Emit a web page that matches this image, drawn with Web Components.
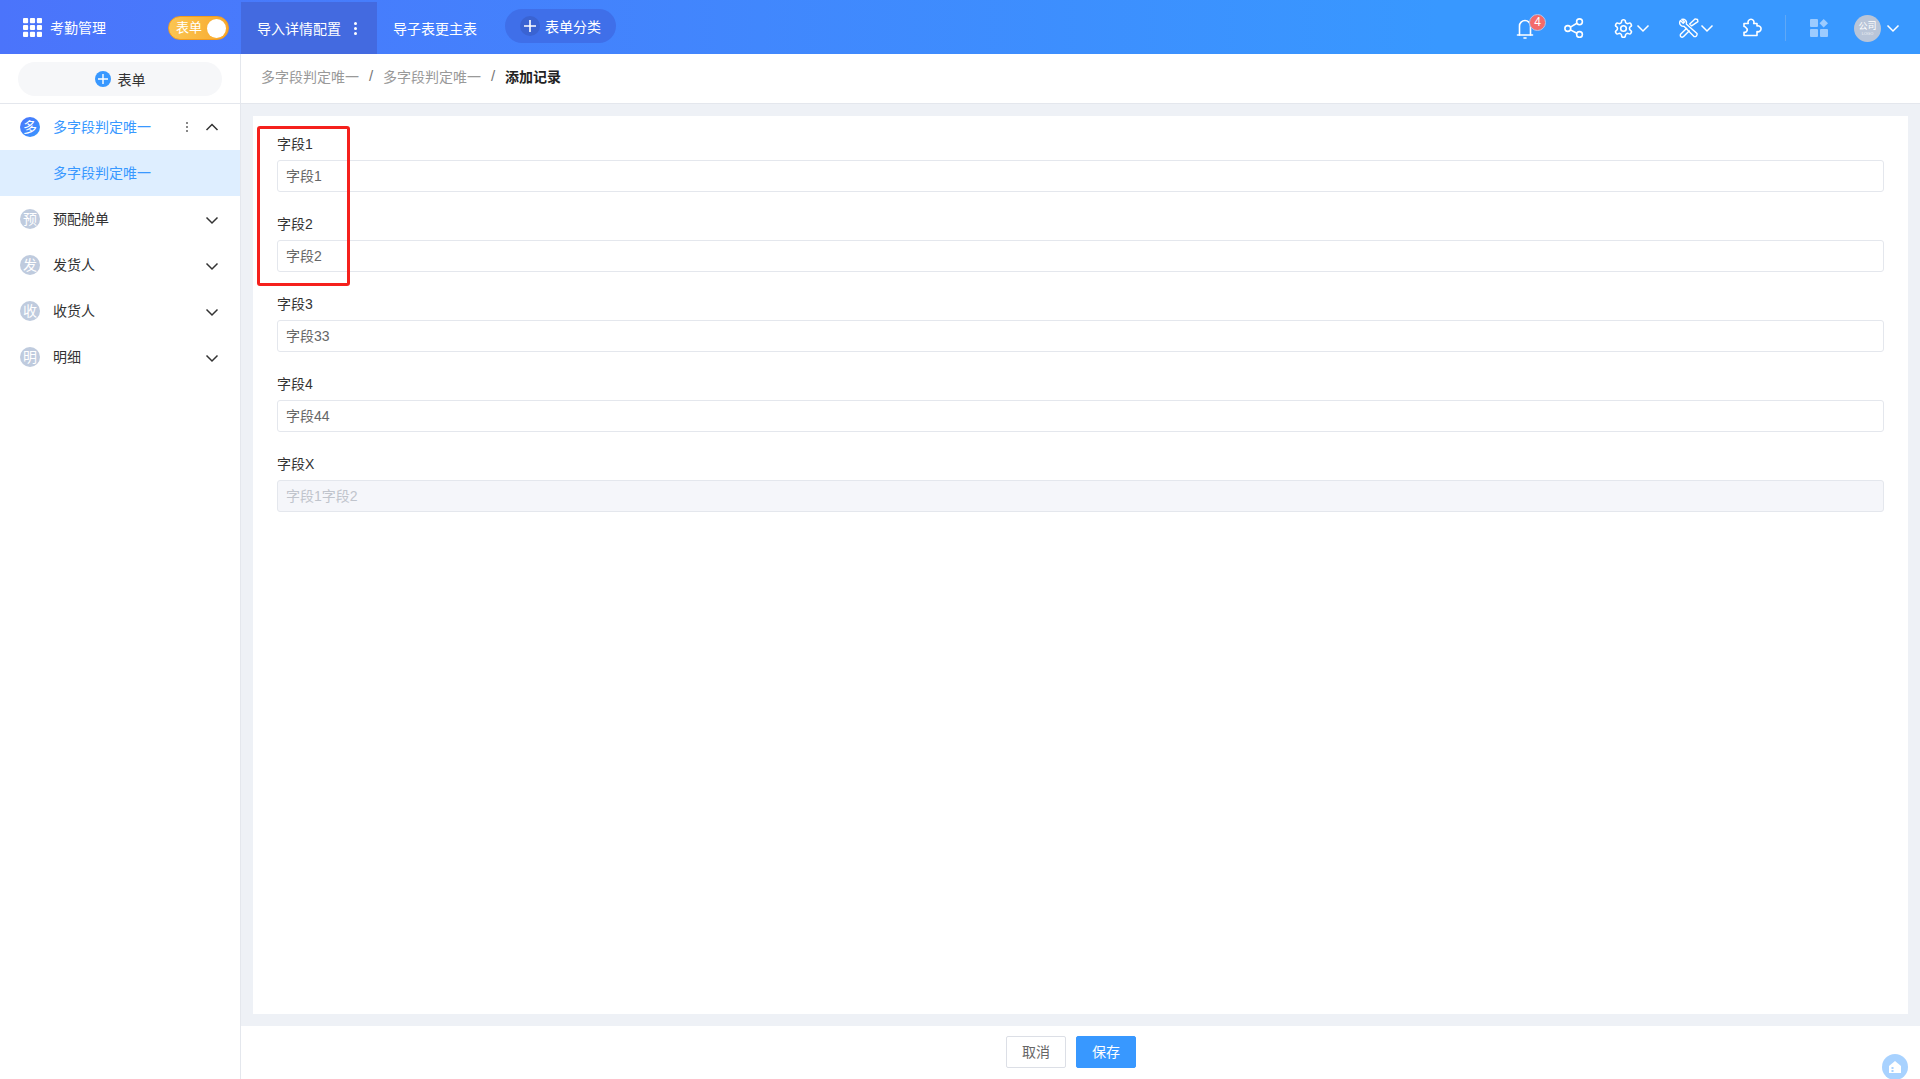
<!DOCTYPE html>
<html lang="zh">
<head>
<meta charset="utf-8">
<title>添加记录</title>
<style>
  html, body { margin: 0; height: 100%; }
  body {
    font: 14px "Liberation Sans", "Noto Sans CJK SC", sans-serif;
    color: #333;
    overflow: hidden;
  }
</style>
</head>
<body>
<app-shell>
  <top-bar slot="top"></top-bar>
  <side-nav slot="side">
    <nav-group mark="多" label="多字段判定唯一" open>
      <nav-sub>多字段判定唯一</nav-sub>
    </nav-group>
    <nav-group mark="预" label="预配舱单"></nav-group>
    <nav-group mark="发" label="发货人"></nav-group>
    <nav-group mark="收" label="收货人"></nav-group>
    <nav-group mark="明" label="明细"></nav-group>
  </side-nav>
  <bread-crumb slot="crumb"></bread-crumb>
  <form-card slot="main">
    <form-field label="字段1">字段1</form-field>
    <form-field label="字段2">字段2</form-field>
    <form-field label="字段3">字段33</form-field>
    <form-field label="字段4">字段44</form-field>
    <form-field label="字段X" disabled>字段1字段2</form-field>
  </form-card>
  <form-footer slot="foot"></form-footer>
</app-shell>
<help-bubble></help-bubble>

<script>
const chevron = (color, up) => `
  <svg width="14" height="14" viewBox="0 0 14 14" fill="none" stroke="${color}" stroke-width="1.5">
    <path d="${up ? 'M1.5 10 7 4.5 12.5 10' : 'M1.5 4.5 7 10 12.5 4.5'}"/>
  </svg>`;

class AppShell extends HTMLElement {
  constructor() {
    super();
    this.attachShadow({ mode: 'open' }).innerHTML = `
      <style>
        :host {
          display: grid;
          grid-template-columns: 241px 1fr;
          grid-template-rows: 54px 50px 1fr 53px;
          height: 1079px;
          background: #eef1f6;
        }
        .top { grid-column: 1 / 3; }
        .side { grid-row: 2 / 5; }
        .main { padding: 12px 12px 12px 12px; display: flex; min-height: 0; }
        .main ::slotted(*) { flex: 1; }
      </style>
      <div class="top"><slot name="top"></slot></div>
      <div class="side"><slot name="side"></slot></div>
      <slot name="crumb"></slot>
      <div class="main"><slot name="main"></slot></div>
      <slot name="foot"></slot>
    `;
  }
}

class TopBar extends HTMLElement {
  constructor() {
    super();
    this.attachShadow({ mode: 'open' }).innerHTML = `
      <style>
        :host {
          display: flex;
          align-items: center;
          height: 54px;
          color: #fff;
          background: linear-gradient(90deg, #4b74fb 0%, #3898ff 75%);
        }
        svg { display: block; flex: none; }
        .brand { width: 168px; display: flex; align-items: center; padding-left: 23px; box-sizing: border-box; gap: 8px; }
        .toggle {
          width: 61px; height: 24px; border-radius: 12px; box-sizing: border-box; flex: none;
          background: linear-gradient(90deg, #fbc552, #f8a92c);
          border: 1px solid #f39c1f;
          display: flex; align-items: center; justify-content: space-between;
          padding: 0 2px 0 7px; margin-top: 2px; font-size: 13px;
        }
        .toggle span:first-child { padding-bottom: 3px; }
        .knob { width: 19px; height: 19px; border-radius: 50%; background: #fff; }
        .tab {
          display: flex; align-items: center; height: 52px; margin-top: 2px; box-sizing: border-box;
        }
        .tab.on { width: 136px; margin-left: 12px; padding-left: 16px; background: #436ae0; gap: 13px; }
        .tab.next { width: 128px; padding-left: 16px; }
        .dots { display: flex; flex-direction: column; gap: 2px; }
        .dots i { width: 3px; height: 3px; background: #fff; border-radius: 50%; }
        .pill {
          width: 111px; height: 34px; margin-top: -2px; border-radius: 17px; background: #3f6fe9;
          display: flex; align-items: center; padding-left: 15px; box-sizing: border-box; gap: 5px; font-size: 14px;
        }
        .plus { width: 20px; height: 20px; border-radius: 50%; background: #3a63d2; display: grid; place-items: center; flex: none; }
        .tools { margin-left: auto; display: flex; align-items: center; height: 100%; box-sizing: border-box; padding-top: 2px; }
        .bell { position: relative; width: 24px; }
        .badge {
          position: absolute; left: 16px; top: -2px; width: 17px; height: 17px; border-radius: 50%;
          background: #f46a6a; border: 1px solid #a9c6f2; box-sizing: border-box;
          font: 12px/15px "Liberation Sans", sans-serif; text-align: center; color: #fff;
        }
        .combo { display: flex; align-items: center; }
        .rule { width: 1px; height: 26px; background: #5fa8f7; }
        .avatar {
          width: 27px; height: 27px; border-radius: 50%; background: #b9c5d8; color: #fff;
          display: flex; flex-direction: column; align-items: center; justify-content: center;
          font-size: 9px; line-height: 10px; flex: none;
        }
        .avatar small { font-size: 4px; line-height: 5px; opacity: .8; }
      </style>
      <div class="brand">
        <svg width="19" height="19" viewBox="0 0 20 20" fill="#fff">
          <rect x="0" y="0" width="5.4" height="5.4" rx="1"/><rect x="7.3" y="0" width="5.4" height="5.4" rx="1"/><rect x="14.6" y="0" width="5.4" height="5.4" rx="1"/>
          <rect x="0" y="7.3" width="5.4" height="5.4" rx="1"/><rect x="7.3" y="7.3" width="5.4" height="5.4" rx="1"/><rect x="14.6" y="7.3" width="5.4" height="5.4" rx="1"/>
          <rect x="0" y="14.6" width="5.4" height="5.4" rx="1"/><rect x="7.3" y="14.6" width="5.4" height="5.4" rx="1"/><rect x="14.6" y="14.6" width="5.4" height="5.4" rx="1"/>
        </svg>
        <span>考勤管理</span>
      </div>
      <div class="toggle"><span>表单</span><span class="knob"></span></div>
      <div class="tab on"><span>导入详情配置</span><span class="dots"><i></i><i></i><i></i></span></div>
      <div class="tab next">导子表更主表</div>
      <div class="pill">
        <span class="plus"><svg width="12" height="12" viewBox="0 0 12 12" stroke="#fff" stroke-width="1.6"><path d="M6 0v12M0 6h12"/></svg></span>
        <span>表单分类</span>
      </div>
      <div class="tools">
        <div class="bell">
          <svg width="24" height="24" viewBox="0 0 24 24" fill="none" stroke="#fff" stroke-width="1.6" stroke-linecap="round">
            <path d="M6.5 19V10a5.5 5.5 0 0 1 11 0v9"/><path d="M4.5 19h15"/><path d="M11 22h2"/>
          </svg>
          <span class="badge">4</span>
        </div>
        <svg style="margin-left:27px" width="20" height="20" viewBox="0 0 20 20" fill="none" stroke="#fff" stroke-width="1.6">
          <circle cx="15.5" cy="3.8" r="2.9"/><circle cx="3.8" cy="10.5" r="2.9"/><circle cx="15.5" cy="16.5" r="2.9"/>
          <path d="M6.4 9.1l6.5-3.9M6.4 11.9l6.6 3.3"/>
        </svg>
        <div class="combo" style="margin-left:29px">
          <svg width="21" height="21" viewBox="0 0 24 24" fill="none" stroke="#fff" stroke-width="1.8" stroke-linejoin="round">
            <path d="M12.22 2h-.44a2 2 0 0 0-2 2v.18a2 2 0 0 1-1 1.73l-.43.25a2 2 0 0 1-2 0l-.15-.08a2 2 0 0 0-2.73.73l-.22.38a2 2 0 0 0 .73 2.73l.15.1a2 2 0 0 1 1 1.72v.51a2 2 0 0 1-1 1.74l-.15.09a2 2 0 0 0-.73 2.73l.22.38a2 2 0 0 0 2.73.73l.15-.08a2 2 0 0 1 2 0l.43.25a2 2 0 0 1 1 1.73V20a2 2 0 0 0 2 2h.44a2 2 0 0 0 2-2v-.18a2 2 0 0 1 1-1.73l.43-.25a2 2 0 0 1 2 0l.15.08a2 2 0 0 0 2.73-.73l.22-.39a2 2 0 0 0-.73-2.73l-.15-.08a2 2 0 0 1-1-1.74v-.5a2 2 0 0 1 1-1.74l.15-.09a2 2 0 0 0 .73-2.73l-.22-.38a2 2 0 0 0-2.73-.73l-.15.08a2 2 0 0 1-2 0l-.43-.25a2 2 0 0 1-1-1.73V4a2 2 0 0 0-2-2z"/>
            <circle cx="12" cy="12" r="3.2"/>
          </svg>
          <span style="margin-left:2px">${chevron('#fff', false)}</span>
        </div>
        <div class="combo" style="margin-left:29px">
          <svg width="20" height="20" viewBox="0 0 20 20" fill="none" stroke="#fff" stroke-width="1.4" stroke-linejoin="round">
            <path d="M1.5 2.5 4.2 5.2 5.5 4 2.8 1.3A3.6 3.6 0 0 1 7.3 5.9L18 15.5A2.4 2.4 0 0 1 15 18.5L5 8.3A3.6 3.6 0 0 1 1.5 2.5Z"/>
            <path d="M18.5 1.5 16 .9 10.7 6l1.9 1.9 6.3-4.3ZM8 10 1.8 16A1.9 1.9 0 0 0 4.6 18.6L10.6 12.4"/>
          </svg>
          <span style="margin-left:1px">${chevron('#fff', false)}</span>
        </div>
        <svg style="margin-left:28px" width="20" height="20" viewBox="0 0 20 20" fill="none" stroke="#fff" stroke-width="1.6" stroke-linejoin="round">
          <path d="M2 5.5h4.3a3 3 0 1 1 5.4 0H15V8a3 3 0 1 1 0 5.6V17.5H2v-3.3a2.5 2.5 0 0 0 2.2-4.4A2.5 2.5 0 0 0 2 8.5Z"/>
        </svg>
        <span class="rule" style="margin-left:23px"></span>
        <svg style="margin-left:24px" width="18" height="18" viewBox="0 0 18 18" fill="#9ccbff">
          <rect x="0" y="0" width="8" height="8" rx="1"/><path d="M13.7 0 18 4.2l-4.3 4.3-4.2-4.3Z"/>
          <rect x="0" y="10" width="8" height="8" rx="1"/><rect x="10" y="10" width="8" height="8" rx="1"/>
        </svg>
        <div class="avatar" style="margin-left:26px"><span>公司</span><small>LOGO</small></div>
        <span style="margin-left:5px;margin-right:20px;display:block">${chevron('#fff', false)}</span>
      </div>
    `;
  }
}

class SideNav extends HTMLElement {
  constructor() {
    super();
    this.attachShadow({ mode: 'open' }).innerHTML = `
      <style>
        :host {
          display: block; height: 100%; background: #fff; box-sizing: border-box;
          border-right: 1px solid #e4e7ed;
        }
        .head { height: 50px; box-sizing: border-box; padding: 8px 18px 0; border-bottom: 1px solid #e4e7ed; }
        .add {
          height: 34px; border-radius: 17px; background: #f6f7f9; color: #333;
          display: flex; align-items: center; justify-content: center; gap: 7px;
        }
        .add i { width: 16px; height: 16px; border-radius: 50%; background: #3898ff; display: grid; place-items: center; }
      </style>
      <div class="head">
        <div class="add">
          <i><svg width="10" height="10" viewBox="0 0 10 10" stroke="#fff" stroke-width="1.4"><path d="M5 0v10M0 5h10"/></svg></i>
          <span>表单</span>
        </div>
      </div>
      <slot></slot>
    `;
  }
}

class NavGroup extends HTMLElement {
  constructor() {
    super();
    const open = this.hasAttribute('open');
    this.attachShadow({ mode: 'open' }).innerHTML = `
      <style>
        :host { display: block; }
        .row { display: flex; align-items: center; height: 46px; padding-left: 20px; color: ${open ? '#3898ff' : '#333'}; }
        .mark {
          width: 20px; height: 20px; border-radius: 50%; color: #fff; font-size: 14px; line-height: 20px;
          text-align: center; flex: none; margin-right: 13px;
          background: ${open ? 'linear-gradient(135deg, #4b74fb, #3898ff)' : '#bfcbde'};
        }
        .label { flex: 1; padding-bottom: 2px; }
        .dots { display: flex; flex-direction: column; gap: 2px; margin-right: 17px; }
        .dots i { width: 2px; height: 2px; background: #888; }
        .arrow { margin-right: 21px; margin-top: ${open ? 0 : 1}px; display: block; height: 14px; }
      </style>
      <div class="row">
        <span class="mark">${this.getAttribute('mark')}</span>
        <span class="label">${this.getAttribute('label')}</span>
        ${open ? '<span class="dots"><i></i><i></i><i></i></span>' : ''}
        <span class="arrow">${chevron('#333', open)}</span>
      </div>
      <slot></slot>
    `;
  }
}

class NavSub extends HTMLElement {
  constructor() {
    super();
    this.attachShadow({ mode: 'open' }).innerHTML = `
      <style>
        :host {
          display: block; height: 46px; line-height: 46px; padding-left: 53px;
          background: #deeeff; color: #3898ff;
        }
      </style>
      <slot></slot>
    `;
  }
}

class BreadCrumb extends HTMLElement {
  constructor() {
    super();
    this.attachShadow({ mode: 'open' }).innerHTML = `
      <style>
        :host {
          display: flex; align-items: center; height: 50px; box-sizing: border-box;
          padding: 0 0 6px 20px; background: #fff; border-bottom: 1px solid #e4e7ed; color: #999;
        }
        .sep { width: 24px; text-align: center; color: #777; font-size: 15px; }
        b { color: #222; font-weight: 700; }
      </style>
      <span>多字段判定唯一</span><span class="sep">/</span>
      <span>多字段判定唯一</span><span class="sep">/</span>
      <b>添加记录</b>
    `;
  }
}

class FormCard extends HTMLElement {
  constructor() {
    super();
    this.attachShadow({ mode: 'open' }).innerHTML = `
      <style>
        :host {
          display: flex; flex-direction: column; gap: 22px; position: relative;
          background: #fff; padding: 18px 24px; box-sizing: border-box;
        }
        .mark {
          position: absolute; left: 4px; top: 10px; width: 93px; height: 160px; box-sizing: border-box;
          border: 3px solid #f5201c; border-radius: 3px;
        }
      </style>
      <slot></slot>
      <div class="mark"></div>
    `;
  }
}

class FormField extends HTMLElement {
  constructor() {
    super();
    const off = this.hasAttribute('disabled');
    this.attachShadow({ mode: 'open' }).innerHTML = `
      <style>
        :host { display: block; }
        label { display: block; height: 20px; line-height: 20px; margin-bottom: 6px; color: #333; }
        .box {
          height: 32px; line-height: 30px; box-sizing: border-box; padding-left: 8px;
          border: 1px solid #e4e7ed; border-radius: 3px;
          color: ${off ? '#c0c4cc' : '#666'}; background: ${off ? '#f5f6fa' : '#fff'};
        }
      </style>
      <label>${this.getAttribute('label')}</label>
      <div class="box"><slot></slot></div>
    `;
  }
}

class FormFooter extends HTMLElement {
  constructor() {
    super();
    this.attachShadow({ mode: 'open' }).innerHTML = `
      <style>
        :host {
          display: flex; justify-content: center; gap: 10px; height: 53px; box-sizing: border-box;
          padding: 10px 19px 11px 0; background: #fff;
        }
        button {
          width: 60px; height: 32px; font: inherit; border-radius: 2px; padding: 0 0 2px;
          border: 1px solid #dcdfe6; background: #fff; color: #666;
        }
        .save { background: #3898ff; border-color: #3898ff; color: #fff; }
      </style>
      <button>取消</button>
      <button class="save">保存</button>
    `;
  }
}

class HelpBubble extends HTMLElement {
  constructor() {
    super();
    this.attachShadow({ mode: 'open' }).innerHTML = `
      <style>
        :host {
          position: fixed; left: 1882px; top: 1054px; width: 26px; height: 26px; border-radius: 50%;
          background: #a8d2ff; display: grid; place-items: center;
        }
      </style>
      <svg width="14" height="14" viewBox="0 0 14 14" fill="#fff">
        <path d="M7 1 13 6v7H1V6Z"/>
        <path fill="#a8d2ff" d="M3.5 7h2v2h-2zM3.5 10h2v2h-2z"/>
      </svg>
    `;
  }
}

customElements.define('app-shell', AppShell);
customElements.define('top-bar', TopBar);
customElements.define('side-nav', SideNav);
customElements.define('nav-group', NavGroup);
customElements.define('nav-sub', NavSub);
customElements.define('bread-crumb', BreadCrumb);
customElements.define('form-card', FormCard);
customElements.define('form-field', FormField);
customElements.define('form-footer', FormFooter);
customElements.define('help-bubble', HelpBubble);
</script>
</body>
</html>
